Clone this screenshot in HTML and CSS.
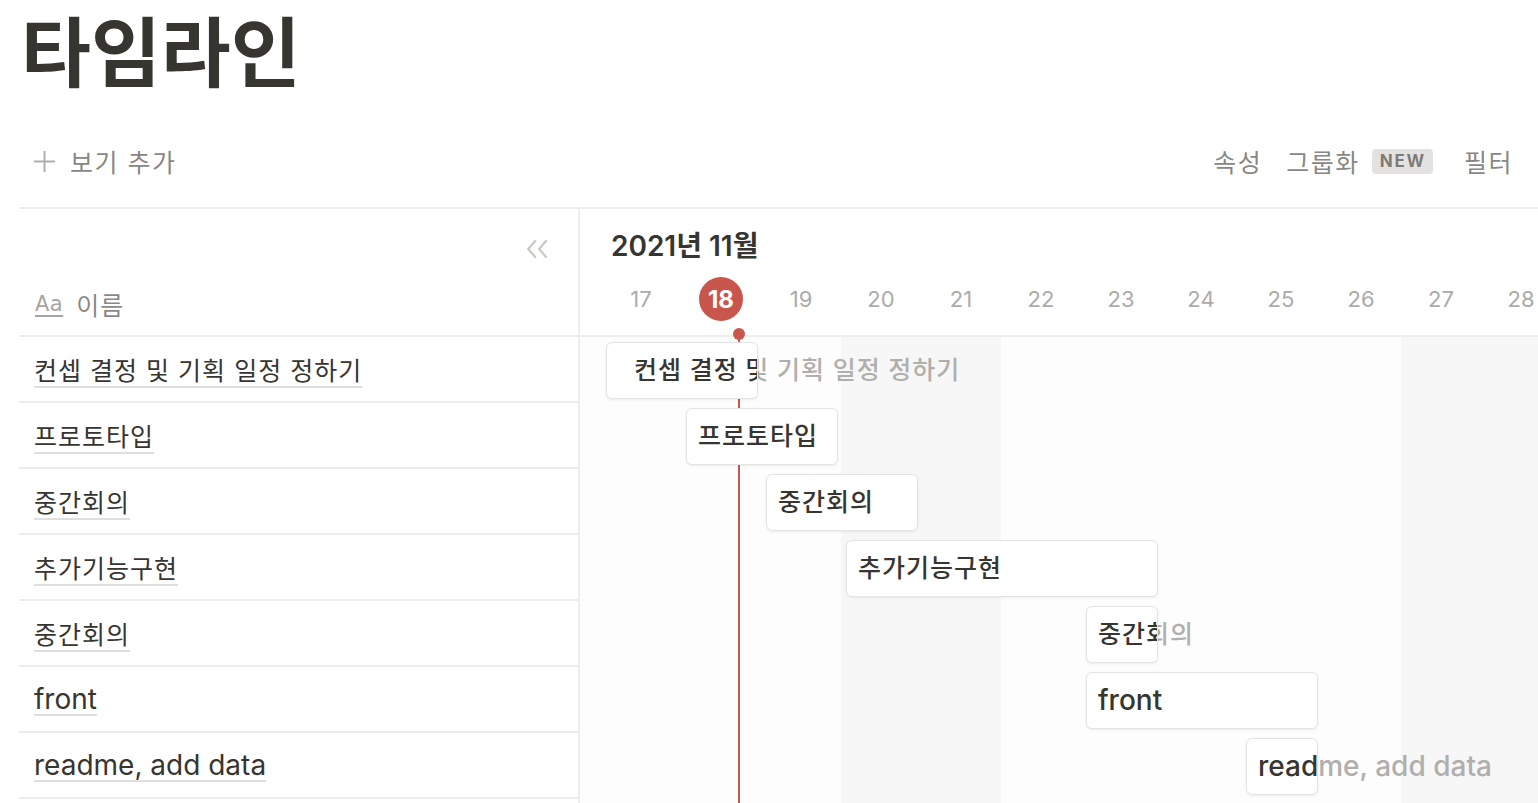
FILE: index.html
```html
<!DOCTYPE html>
<html lang="ko">
<head>
<meta charset="utf-8">
<title>타임라인</title>
<link rel="stylesheet" href="styles.css">
</head>
<body>
<div class="page">
  <h1 class="title">타임라인</h1>
  <div class="toolbar">
    <div class="add-view">
      <svg class="plus" viewBox="0 0 24 24"><path d="M12 1v22M1 12h22" /></svg>
      <span>보기 추가</span>
    </div>
    <div class="actions">
      <span class="action">속성</span>
      <span class="action group">그룹화<span class="badge">NEW</span></span>
      <span class="action filter">필터</span>
    </div>
  </div>
  <div class="timeline">
    <div class="names">
      <div class="names-head">
        <div class="collapse">
          <svg viewBox="0 0 24 18"><path d="M10 1 L3 9 L10 17 M20 1 L13 9 L20 17" /></svg>
        </div>
        <div class="col-title"><span class="aa">Aa</span><span>이름</span></div>
      </div>
      <div class="name-row"><span class="name">컨셉 결정 및 기획 일정 정하기</span></div>
      <div class="name-row"><span class="name">프로토타입</span></div>
      <div class="name-row"><span class="name">중간회의</span></div>
      <div class="name-row"><span class="name">추가기능구현</span></div>
      <div class="name-row"><span class="name">중간회의</span></div>
      <div class="name-row"><span class="name latin">front</span></div>
      <div class="name-row"><span class="name latin">readme, add data</span></div>
    </div>
    <div class="chart">
      <div class="chart-head">
        <div class="month">2021년 11월</div>
        <div class="days">
          <span class="day" style="grid-column: 2">17</span>
          <span class="day today" style="grid-column: 3"><b>18</b></span>
          <span class="day" style="grid-column: 4">19</span>
          <span class="day" style="grid-column: 5">20</span>
          <span class="day" style="grid-column: 6">21</span>
          <span class="day" style="grid-column: 7">22</span>
          <span class="day" style="grid-column: 8">23</span>
          <span class="day" style="grid-column: 9">24</span>
          <span class="day" style="grid-column: 10">25</span>
          <span class="day" style="grid-column: 11">26</span>
          <span class="day" style="grid-column: 12">27</span>
          <span class="day" style="grid-column: 13">28</span>
          <span class="day" style="grid-column: 14">29</span>
        </div>
      </div>
      <div class="chart-body">
        <div class="bar-row">
          <span class="ghost ghost-wide" style="grid-column: 2">컨셉 결정 및 기획 일정 정하기</span>
          <div class="card card-wide" style="grid-column: 2 / span 2">컨셉 결정 및 기획 일정 정하기</div>
        </div>
        <div class="bar-row">
          <span class="ghost" style="grid-column: 3">프로토타입</span>
          <div class="card" style="grid-column: 3 / span 2">프로토타입</div>
        </div>
        <div class="bar-row">
          <span class="ghost" style="grid-column: 4">중간회의</span>
          <div class="card" style="grid-column: 4 / span 2">중간회의</div>
        </div>
        <div class="bar-row">
          <span class="ghost" style="grid-column: 5">추가기능구현</span>
          <div class="card" style="grid-column: 5 / span 4">추가기능구현</div>
        </div>
        <div class="bar-row">
          <span class="ghost" style="grid-column: 8">중간회의</span>
          <div class="card" style="grid-column: 8 / span 1">중간회의</div>
        </div>
        <div class="bar-row">
          <span class="ghost latin" style="grid-column: 8">front</span>
          <div class="card latin" style="grid-column: 8 / span 3">front</div>
        </div>
        <div class="bar-row">
          <span class="ghost latin" style="grid-column: 10">readme, add data</span>
          <div class="card latin" style="grid-column: 10 / span 1">readme, add data</div>
        </div>
      </div>
      <div class="today-line"></div>
      <div class="today-dot"></div>
    </div>
  </div>
</div>
</body>
</html>
```
FILE: styles.css
```css
* { box-sizing: border-box; }

html, body {
  margin: 0;
  background: #ffffff;
}

body {
  font-family: Inter, "Noto Sans CJK KR", sans-serif;
  color: #37352f;
  overflow: hidden;
}

.page {
  width: 1538px;
  height: 803px;
  padding-left: 19px;
  overflow: hidden;
}

.title {
  margin: 0;
  padding: 5px 0 39px 2px;
  font-family: "Noto Sans CJK KR", sans-serif;
  font-size: 76px;
  line-height: 86px;
  font-weight: 700;
  letter-spacing: 0;
  color: #37352f;
}

.toolbar {
  display: flex;
  justify-content: space-between;
  align-items: center;
  height: 77px;
  padding: 0 25px 15px 14px;
}

.add-view {
  display: flex;
  align-items: center;
  gap: 14px;
  font-size: 25px;
  letter-spacing: 1.5px;
  color: rgba(55, 53, 47, 0.62);
}

.plus {
  width: 23px;
  height: 23px;
  fill: none;
  stroke: rgba(55, 53, 47, 0.4);
  stroke-width: 2;
}

.actions {
  display: flex;
  align-items: center;
  font-size: 25px;
  letter-spacing: 1.5px;
  color: rgba(55, 53, 47, 0.62);
}

.action {
  display: flex;
  align-items: center;
}

.group { margin-left: 24px; }
.filter { margin-left: 31px; }

.badge {
  margin-left: 12px;
  height: 25px;
  padding: 0 7px 0 8px;
  border-radius: 4px;
  background: #e3e2e0;
  color: rgba(55, 53, 47, 0.6);
  font-size: 17px;
  font-weight: 700;
  letter-spacing: 1.8px;
  line-height: 25px;
}

.timeline {
  display: flex;
  height: 596px;
  border-top: 2px solid #ededec;
}

.names {
  width: 561px;
  flex: none;
  border-right: 2px solid #ededec;
}

.names-head {
  height: 128px;
  padding-top: 28px;
  border-bottom: 2px solid #ededec;
}

.collapse {
  display: flex;
  justify-content: flex-end;
  padding-right: 27px;
  height: 24px;
}

.collapse svg {
  width: 26px;
  height: 20px;
  margin-top: 2px;
  fill: none;
  stroke: #c9c8c5;
  stroke-width: 2;
}

.col-title {
  display: flex;
  align-items: center;
  gap: 13px;
  margin-top: 24px;
  height: 38px;
  padding-left: 16px;
  font-size: 25px;
  letter-spacing: 1px;
  color: rgba(55, 53, 47, 0.6);
}

.aa {
  font-family: "DejaVu Sans", sans-serif;
  font-size: 21px;
  color: #a6a5a2;
  text-decoration: underline;
  text-decoration-thickness: 2px;
  text-underline-offset: 4px;
  letter-spacing: 0.5px;
}

.name-row {
  display: flex;
  align-items: center;
  height: 66px;
  padding-left: 15px;
  border-bottom: 2px solid #ededec;
  font-size: 25px;
  letter-spacing: 1px;
}

.name {
  text-decoration: underline;
  text-decoration-color: rgba(55, 53, 47, 0.16);
  text-decoration-thickness: 2px;
  text-underline-offset: 6px;
  white-space: nowrap;
}

.name.latin {
  font-size: 28px;
  letter-spacing: 0;
  text-underline-offset: 5px;
}

.chart {
  flex: 1;
  position: relative;
  overflow: hidden;
}

.chart-head {
  height: 128px;
  padding-top: 20px;
  border-bottom: 2px solid #ededec;
  background: #ffffff;
}

.month {
  padding-left: 31px;
  font-size: 28px;
  line-height: 34px;
  font-weight: 600;
  color: #37352f;
}

.days {
  display: grid;
  grid-template-columns: 21px repeat(13, 80px);
  margin-top: 14px;
  height: 44px;
}

.day {
  grid-row: 1;
  display: flex;
  align-items: center;
  justify-content: center;
  font-size: 22px;
  color: #acaba9;
}

.today b {
  width: 44px;
  height: 44px;
  border-radius: 50%;
  background: #c8564c;
  color: #ffffff;
  font-weight: 700;
  font-size: 24px;
  display: flex;
  align-items: center;
  justify-content: center;
}

.chart-body {
  height: 466px;
  background-color: #fdfdfd;
  background-image: linear-gradient(to right,
    transparent 261px, #f7f7f7 261px, #f7f7f7 421px, transparent 421px,
    transparent 821px, #f7f7f7 821px, #f7f7f7 981px, transparent 981px);
}

.bar-row {
  display: grid;
  grid-template-columns: 21px repeat(13, 80px);
  height: 66px;
  align-items: center;
}

.ghost {
  grid-row: 1;
  justify-self: start;
  position: relative;
  z-index: 1;
  padding-left: 17px;
  font-size: 25px;
  letter-spacing: 1px;
  font-weight: 500;
  line-height: 55px;
  white-space: nowrap;
  color: #b0afac;
}

.ghost-wide { padding-left: 33px; }

.card {
  grid-row: 1;
  position: relative;
  z-index: 2;
  height: 57px;
  margin: 0 3px 0 5px;
  padding-left: 11px;
  background: #ffffff;
  border: 1px solid #e4e4e2;
  border-radius: 6px;
  box-shadow: 0 1px 3px rgba(15, 15, 15, 0.07);
  font-size: 25px;
  letter-spacing: 1px;
  font-weight: 500;
  line-height: 55px;
  white-space: nowrap;
  overflow: hidden;
  color: #37352f;
}

.card-wide { padding-left: 27px; }

.ghost.latin,
.card.latin {
  font-size: 28px;
  letter-spacing: 0;
}

.today-line {
  position: absolute;
  left: 158px;
  top: 125px;
  bottom: 0;
  width: 2px;
  background: #c8564c;
  z-index: 1;
}

.today-dot {
  position: absolute;
  left: 153px;
  top: 119px;
  width: 12px;
  height: 12px;
  border-radius: 50%;
  background: #c8564c;
  z-index: 3;
}
```
